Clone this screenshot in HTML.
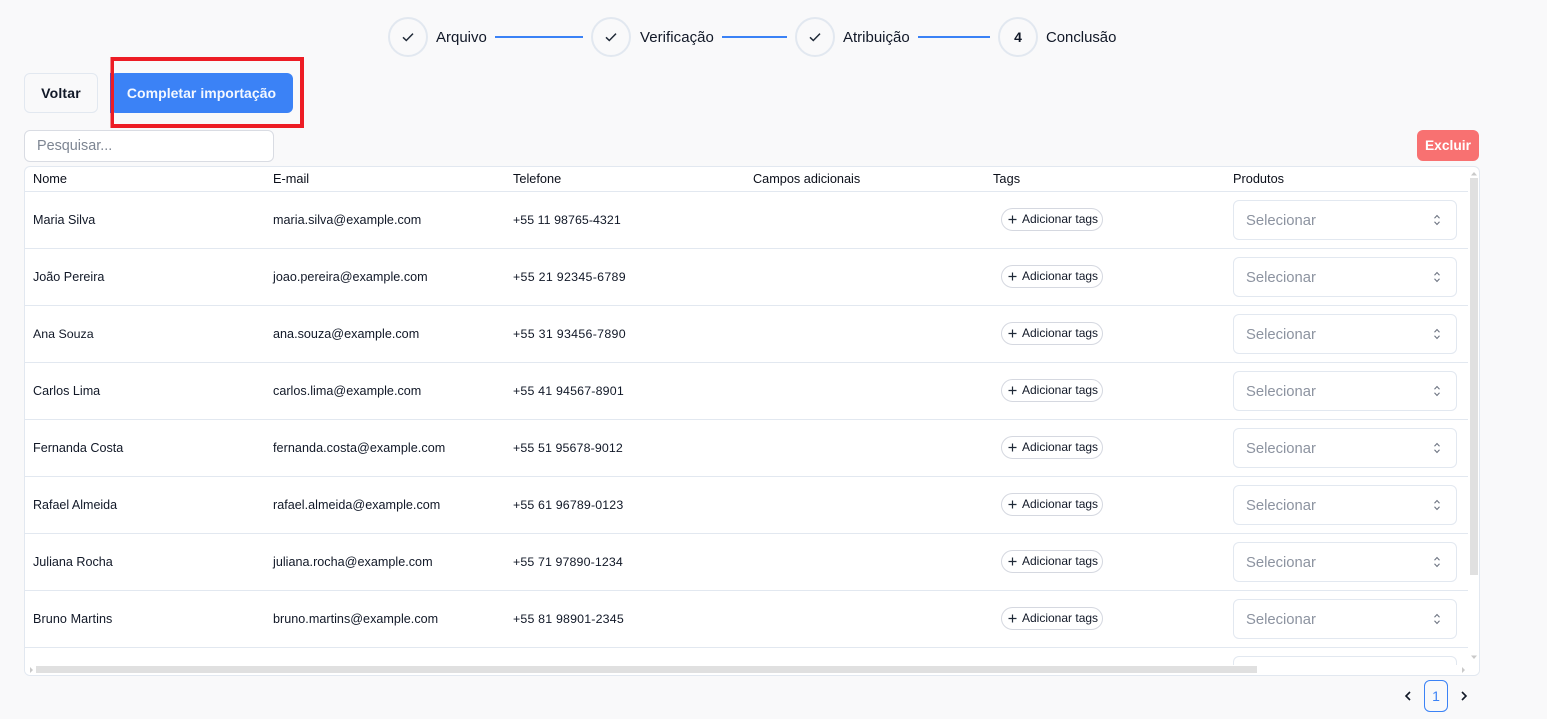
<!DOCTYPE html>
<html lang="pt-BR"><head><meta charset="utf-8"><title>Importação</title>
<style>
html,body{margin:0;padding:0;width:1547px;height:719px;overflow:hidden;background:#f9f9fa;font-family:"Liberation Sans",sans-serif;color:#0f172a}
.a,.t,.c,.n,.e,.p,.h,.s,.g,.l{position:absolute;white-space:nowrap}
.a{display:block}
.c{width:36px;height:36px;border:2px solid #e2e8f0;border-radius:50%;top:17px;box-sizing:content-box}
.c svg{position:absolute;left:10px;top:10px}
.l{top:28px;line-height:20px;font-size:15px;color:#111827}
.ln{position:absolute;top:36px;height:2px;background:#3b82f6}
.h{top:170px;line-height:18px;font-size:12.75px;color:#0b0f1a}
.r{position:absolute;left:25px;width:1443px;height:1px;background:#e2e8f0}
.n,.e,.p{line-height:18px;font-size:12.6px;color:#111827}
.n{left:33px}.e{left:273px;letter-spacing:.02px}.p{left:513px;font-size:12.4px}
.g{left:1001px;width:100px;height:21px;border:1px solid #d5d8e0;border-radius:12px;background:#fff}
.g svg{position:absolute;left:5px;top:5px}
.g span{position:absolute;left:20px;top:2px;line-height:16px;font-size:12px;color:#111827}
.s{left:1233px;width:222px;height:38px;border:1px solid #e2e8f0;border-radius:6px;background:#fff}
.s span{position:absolute;left:12px;top:10px;line-height:20px;font-size:14.8px;color:#8c93a0}
.s svg{position:absolute;left:195px;top:11px}
</style></head><body>

<div class="c" style="left:388px"><svg width="16" height="16" viewBox="0 0 16 16" fill="none" stroke="#1f2937" stroke-width="1.5"><path d="M3 8.3l3.3 3.2L13 4.6"/></svg></div>
<div class="l" style="left:436px">Arquivo</div>
<div class="ln" style="left:495px;width:88px"></div>
<div class="c" style="left:591px"><svg width="16" height="16" viewBox="0 0 16 16" fill="none" stroke="#1f2937" stroke-width="1.5"><path d="M3 8.3l3.3 3.2L13 4.6"/></svg></div>
<div class="l" style="left:640px;letter-spacing:.05px">Verificação</div>
<div class="ln" style="left:722px;width:65px"></div>
<div class="c" style="left:795px"><svg width="16" height="16" viewBox="0 0 16 16" fill="none" stroke="#1f2937" stroke-width="1.5"><path d="M3 8.3l3.3 3.2L13 4.6"/></svg></div>
<div class="l" style="left:843px">Atribuição</div>
<div class="ln" style="left:918px;width:72px"></div>
<div class="c" style="left:998px;text-align:center;line-height:36px;font-size:14px;font-weight:bold;color:#111827">4</div>
<div class="l" style="left:1046px;font-size:14.9px">Conclusão</div>

<div class="a" style="left:24px;top:73px;width:72px;height:38px;border:1px solid #e2e8f0;border-radius:6px;text-align:center;line-height:38px;font-size:14px;font-weight:bold;letter-spacing:.2px;color:#111827">Voltar</div>
<div class="a" style="left:110px;top:73px;width:183px;height:40px;background:#3b82f6;border-radius:6px;text-align:center;line-height:40px;font-size:14px;font-weight:bold;letter-spacing:.03px;color:#f4f8ff">Completar importação</div>
<div class="a" style="left:111px;top:57px;width:186px;height:63px;border:4px solid #ed1c24;border-left-width:3px"></div>
<div class="a" style="left:110px;top:73px;width:1px;height:40px;background:#6a45a8"></div>
<div class="a" style="left:110px;top:57px;width:1px;height:16px;background:#f08a8e"></div>
<div class="a" style="left:110px;top:113px;width:1px;height:15px;background:#f08a8e"></div>

<div class="a" style="left:24px;top:130px;width:248px;height:30px;border:1px solid #d9dce3;border-radius:6px;background:#fff"><span style="position:absolute;left:12px;top:5px;line-height:20px;font-size:14.4px;color:#7d8592">Pesquisar...</span></div>
<div class="a" style="left:1417px;top:130px;width:62px;height:31px;background:#f87171;border-radius:6px;text-align:center;line-height:31px;font-size:13.8px;font-weight:bold;color:#fff">Excluir</div>

<div class="a" style="left:24px;top:166px;width:1454px;height:508px;border:1px solid #e2e8f0;border-radius:6px;background:#fff;overflow:hidden">
<div class="a" style="left:1208px;top:489px;width:222px;height:30px;border:1px solid #e2e8f0;border-radius:6px;background:#fff"></div>
<div class="a" style="left:0;top:498px;width:1454px;height:10px;background:#fff"></div>
<div class="a" style="left:11px;top:499px;width:1221px;height:7px;background:#e0e0e0"></div>
<div class="a" style="left:1445px;top:11px;width:8px;height:397px;background:#e0e0e0"></div>
<svg class="a" style="left:0;top:0" width="1454" height="508" fill="#c9c9c9"><path d="M1446 8.5l3-3.5 3 3.5zM1446 488.5l3 3.5 3-3.5zM8 503l-3-3v6zM1437 500v6l3-3z"/></svg>
</div>

<div class="h" style="left:33px">Nome</div><div class="h" style="left:273px">E-mail</div><div class="h" style="left:513px">Telefone</div><div class="h" style="left:753px;font-size:12.7px">Campos adicionais</div><div class="h" style="left:993px;letter-spacing:.05px">Tags</div><div class="h" style="left:1233px">Produtos</div>
<div class="r" style="top:191px"></div><div class="r" style="top:248px"></div><div class="r" style="top:305px"></div><div class="r" style="top:362px"></div><div class="r" style="top:419px"></div><div class="r" style="top:476px"></div><div class="r" style="top:533px"></div><div class="r" style="top:590px"></div><div class="r" style="top:647px"></div>

<div class="n" style="top:211px">Maria Silva</div><div class="e" style="top:211px">maria.silva@example.com</div><div class="p" style="top:211px;letter-spacing:.05px">+55 11 98765-4321</div>
<div class="g" style="top:208px"><svg width="11" height="11" viewBox="0 0 11 11" stroke="#1f2937" stroke-width="1.2"><path d="M1.5 5.5h8M5.5 1.5v8"/></svg><span>Adicionar tags</span></div>
<div class="s" style="top:200px"><span>Selecionar</span><svg width="16" height="16" viewBox="0 0 16 16" fill="none" stroke="#6b7280" stroke-width="1.1"><path d="M5.5 6.2L8 3.5l2.5 2.7M5.5 9.8L8 12.5l2.5-2.7"/></svg></div>

<div class="n" style="top:268px">João Pereira</div><div class="e" style="top:268px">joao.pereira@example.com</div><div class="p" style="top:268px;letter-spacing:.3px">+55 21 92345-6789</div>
<div class="g" style="top:265px"><svg width="11" height="11" viewBox="0 0 11 11" stroke="#1f2937" stroke-width="1.2"><path d="M1.5 5.5h8M5.5 1.5v8"/></svg><span>Adicionar tags</span></div>
<div class="s" style="top:257px"><span>Selecionar</span><svg width="16" height="16" viewBox="0 0 16 16" fill="none" stroke="#6b7280" stroke-width="1.1"><path d="M5.5 6.2L8 3.5l2.5 2.7M5.5 9.8L8 12.5l2.5-2.7"/></svg></div>

<div class="n" style="top:325px;font-size:12.4px">Ana Souza</div><div class="e" style="top:325px">ana.souza@example.com</div><div class="p" style="top:325px;letter-spacing:.3px">+55 31 93456-7890</div>
<div class="g" style="top:322px"><svg width="11" height="11" viewBox="0 0 11 11" stroke="#1f2937" stroke-width="1.2"><path d="M1.5 5.5h8M5.5 1.5v8"/></svg><span>Adicionar tags</span></div>
<div class="s" style="top:314px"><span>Selecionar</span><svg width="16" height="16" viewBox="0 0 16 16" fill="none" stroke="#6b7280" stroke-width="1.1"><path d="M5.5 6.2L8 3.5l2.5 2.7M5.5 9.8L8 12.5l2.5-2.7"/></svg></div>

<div class="n" style="top:382px">Carlos Lima</div><div class="e" style="top:382px">carlos.lima@example.com</div><div class="p" style="top:382px;letter-spacing:.18px">+55 41 94567-8901</div>
<div class="g" style="top:379px"><svg width="11" height="11" viewBox="0 0 11 11" stroke="#1f2937" stroke-width="1.2"><path d="M1.5 5.5h8M5.5 1.5v8"/></svg><span>Adicionar tags</span></div>
<div class="s" style="top:371px"><span>Selecionar</span><svg width="16" height="16" viewBox="0 0 16 16" fill="none" stroke="#6b7280" stroke-width="1.1"><path d="M5.5 6.2L8 3.5l2.5 2.7M5.5 9.8L8 12.5l2.5-2.7"/></svg></div>

<div class="n" style="top:439px">Fernanda Costa</div><div class="e" style="top:439px;letter-spacing:.05px">fernanda.costa@example.com</div><div class="p" style="top:439px;letter-spacing:.12px">+55 51 95678-9012</div>
<div class="g" style="top:436px"><svg width="11" height="11" viewBox="0 0 11 11" stroke="#1f2937" stroke-width="1.2"><path d="M1.5 5.5h8M5.5 1.5v8"/></svg><span>Adicionar tags</span></div>
<div class="s" style="top:428px"><span>Selecionar</span><svg width="16" height="16" viewBox="0 0 16 16" fill="none" stroke="#6b7280" stroke-width="1.1"><path d="M5.5 6.2L8 3.5l2.5 2.7M5.5 9.8L8 12.5l2.5-2.7"/></svg></div>

<div class="n" style="top:496px;font-size:12.5px">Rafael Almeida</div><div class="e" style="top:496px">rafael.almeida@example.com</div><div class="p" style="top:496px;letter-spacing:.15px">+55 61 96789-0123</div>
<div class="g" style="top:493px"><svg width="11" height="11" viewBox="0 0 11 11" stroke="#1f2937" stroke-width="1.2"><path d="M1.5 5.5h8M5.5 1.5v8"/></svg><span>Adicionar tags</span></div>
<div class="s" style="top:485px"><span>Selecionar</span><svg width="16" height="16" viewBox="0 0 16 16" fill="none" stroke="#6b7280" stroke-width="1.1"><path d="M5.5 6.2L8 3.5l2.5 2.7M5.5 9.8L8 12.5l2.5-2.7"/></svg></div>

<div class="n" style="top:553px">Juliana Rocha</div><div class="e" style="top:553px">juliana.rocha@example.com</div><div class="p" style="top:553px;letter-spacing:.12px">+55 71 97890-1234</div>
<div class="g" style="top:550px"><svg width="11" height="11" viewBox="0 0 11 11" stroke="#1f2937" stroke-width="1.2"><path d="M1.5 5.5h8M5.5 1.5v8"/></svg><span>Adicionar tags</span></div>
<div class="s" style="top:542px"><span>Selecionar</span><svg width="16" height="16" viewBox="0 0 16 16" fill="none" stroke="#6b7280" stroke-width="1.1"><path d="M5.5 6.2L8 3.5l2.5 2.7M5.5 9.8L8 12.5l2.5-2.7"/></svg></div>

<div class="n" style="top:610px;letter-spacing:.08px">Bruno Martins</div><div class="e" style="top:610px">bruno.martins@example.com</div><div class="p" style="top:610px;letter-spacing:.18px">+55 81 98901-2345</div>
<div class="g" style="top:607px"><svg width="11" height="11" viewBox="0 0 11 11" stroke="#1f2937" stroke-width="1.2"><path d="M1.5 5.5h8M5.5 1.5v8"/></svg><span>Adicionar tags</span></div>
<div class="s" style="top:599px"><span>Selecionar</span><svg width="16" height="16" viewBox="0 0 16 16" fill="none" stroke="#6b7280" stroke-width="1.1"><path d="M5.5 6.2L8 3.5l2.5 2.7M5.5 9.8L8 12.5l2.5-2.7"/></svg></div>

<svg class="a" style="left:1402px;top:690px" width="12" height="12" viewBox="0 0 12 12" fill="none" stroke="#111827" stroke-width="1.6"><path d="M8 2L4 6l4 4"/></svg>
<div class="a" style="left:1424px;top:680px;width:22px;height:30px;border:1px solid #3b82f6;border-radius:6px;text-align:center;line-height:30px;font-size:14px;color:#3b82f6">1</div>
<svg class="a" style="left:1458px;top:690px" width="12" height="12" viewBox="0 0 12 12" fill="none" stroke="#111827" stroke-width="1.6"><path d="M4 2l4 4-4 4"/></svg>
</body></html>
